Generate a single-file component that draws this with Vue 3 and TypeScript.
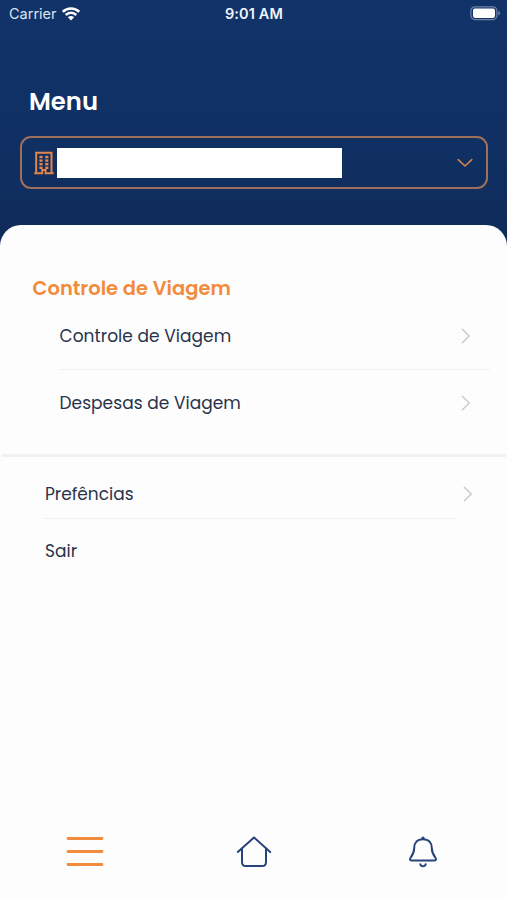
<script setup lang="ts">
interface MenuItem {
  id: string
  label: string
}

const travelItems: MenuItem[] = [
  { id: 'control', label: 'Controle de Viagem' },
  { id: 'expenses', label: 'Despesas de Viagem' },
]
const windows: { x: number; y: number }[] = [0, 1, 2, 3].flatMap((row) =>
  [5.4, 11.2].map((x) => ({ x, y: 4.8 + row * 3.6 })),
)
</script>

<template>
  <main class="screen">
    <header class="header">
      <div class="status">
        <div class="carrier">
          <span>Carrier</span>
          <svg width="18" height="14" viewBox="0 0 18 14">
            <g fill="none" stroke="#fff" stroke-width="2.5">
              <path d="M.8 4.8C5.3.3 12.7.3 17.2 4.8" />
              <path d="M3.7 8C6.7 5.1 11.3 5.1 14.3 8" />
            </g>
            <path d="M5.9 10.2C7.6 8.6 10.4 8.6 12.1 10.2L9 13.5Z" fill="#fff" />
          </svg>
        </div>
        <span class="clock">9:01 AM</span>
        <svg class="battery" width="31" height="15" viewBox="0 0 31 15">
          <rect x=".9" y=".8" width="26" height="12.8" rx="4" fill="none" stroke="#7184a8" stroke-width="1.2" />
          <rect x="3" y="2.5" width="22" height="9.4" rx="1.8" fill="#fff" />
          <path d="M28.3 4.8Q30 5.8 30 7.2T28.3 9.6Z" fill="#7184a8" />
        </svg>
      </div>
      <h1 class="title">Menu</h1>
      <div class="select">
        <svg width="20" height="24" viewBox="0 0 20 24" fill="none" stroke="#e5844a">
          <path d="M2.2 22V1.8H17.5V22" stroke-width="2" />
          <path d="M.3 22.3H8.2V19H11.6V22.3H19.6" stroke-width="1.9" />
          <rect v-for="(w, i) in windows" :key="i" :x="w.x" :y="w.y" width="3.2" height="2.4" fill="#e5844a" stroke="none" />
        </svg>
        <div class="value"></div>
        <svg class="down" width="16" height="10" viewBox="0 0 16 10">
          <path d="M1.2 1.6L8 8L14.8 1.6" fill="none" stroke="#d98650" stroke-width="1.5" stroke-linecap="round" stroke-linejoin="round" />
        </svg>
      </div>
    </header>

    <section class="sheet">
      <div class="travel">
        <h2 class="heading">Controle de Viagem</h2>
        <div v-for="item in travelItems" :key="item.id" class="row" :class="item.id">
          <span>{{ item.label }}</span>
          <svg class="chevron" width="10" height="16" viewBox="0 0 10 16">
            <path d="M1.3 1.2L8.3 8L1.3 14.8" />
          </svg>
        </div>
      </div>
      <div class="general">
        <div class="row preferences">
          <span>Prefências</span>
          <svg class="chevron" width="10" height="16" viewBox="0 0 10 16">
            <path d="M1.3 1.2L8.3 8L1.3 14.8" />
          </svg>
        </div>
        <div class="rule"></div>
        <div class="row exit"><span>Sair</span></div>
      </div>
    </section>

    <nav class="tabs">
      <svg width="38" height="34" viewBox="0 0 38 34">
        <path d="M2 3.5H36M2 16.5H36M2 29.5H36" stroke="#f38b3c" stroke-width="2.8" stroke-linecap="round" />
      </svg>
      <svg width="36" height="34" viewBox="0 0 36 34" fill="none" stroke="#26437a" stroke-width="2" stroke-linecap="round" stroke-linejoin="round">
        <path d="M1.8 17L18 2.4L34.2 17" />
        <path d="M6 14V27.2Q6 31 9.8 31H26.2Q30 31 30 27.2V14" />
      </svg>
      <svg width="30" height="34" viewBox="0 0 30 34" fill="none" stroke="#26437a" stroke-width="2" stroke-linecap="round" stroke-linejoin="round">
        <path d="M15 4.2C9.2 4.2 6.2 8 6.2 13C6.2 18 5 19.5 2.7 22.5C1.3 24.5 2 25.6 4 25.6H26C28 25.6 28.7 24.5 27.3 22.5C25 19.5 23.8 18 23.8 13C23.8 8 20.8 4.2 15 4.2Z" />
        <path d="M12.3 29.2C13 31.8 17 31.8 17.7 29.2" />
        <circle cx="15" cy="3.2" r=".7" fill="#26437a" />
      </svg>
    </nav>
  </main>
</template>

<style>
body {
  background: #fdfdfd;
}
</style>

<style scoped>
.screen {
  box-sizing: border-box;
  height: 900px;
  display: flex;
  flex-direction: column;
  background: #fdfdfd;
  color: #28334b;
  font-family: Poppins, Inter, sans-serif;
}
svg {
  display: block;
  flex: none;
}
.header {
  height: 246px;
  flex: none;
  background: linear-gradient(#113369, #103063 60%, #0f2b58);
}
.status {
  display: grid;
  grid-template-columns: 1fr auto 1fr;
  align-items: center;
  height: 27px;
  padding: 0 6px 0 9px;
  color: #fff;
  font: 14.5px/20px Inter, sans-serif;
}
.carrier {
  display: flex;
  align-items: center;
  gap: 5px;
  color: #dce4f0;
}
.clock {
  font-weight: 600;
  letter-spacing: 0.15px;
  margin-right: 2px;
  color: #f0f4fa;
}
.battery {
  justify-self: end;
}
.title {
  margin: 57px 0 0 29px;
  font-size: 24.3px;
  line-height: 36px;
  font-weight: 600;
  color: #fff;
}
.select {
  box-sizing: border-box;
  display: flex;
  align-items: center;
  height: 53px;
  margin: 16px 19px 0 20px;
  padding: 0 13px 0 12px;
  border: 2px solid #a06f5c;
  border-radius: 11px;
}
.value {
  width: 285px;
  height: 30px;
  margin-left: 3px;
  background: #fff;
}
.down {
  margin-left: auto;
}
.sheet {
  flex: 1;
  margin-top: -21px;
  border-radius: 21px 21px 0 0;
  background: #fdfdfd;
}
.travel {
  box-sizing: border-box;
  height: 229px;
  padding: 49px 17px 0 32px;
}
.heading {
  margin: 0 0 0 0.5px;
  font-size: 19.5px;
  line-height: 30px;
  font-weight: 600;
  color: #f38b3c;
}
.row {
  display: flex;
  align-items: center;
  justify-content: space-between;
  font-size: 17px;
}
.travel .row {
  box-sizing: border-box;
  height: 67px;
  margin-left: 27.5px;
  padding-right: 19px;
  letter-spacing: 0.05px;
}
.travel .control {
  height: 66px;
  padding-bottom: 1px;
  border-bottom: 1px solid #f0f0f2;
}
.travel .expenses {
  height: 66px;
}
.chevron path {
  fill: none;
  stroke: #c6c9d0;
  stroke-width: 1.4;
  stroke-linecap: round;
  stroke-linejoin: round;
}
.general {
  margin: 0 1px 0 2px;
  padding: 3px 33px 0 43px;
  border-top: 3px solid #f1f1f3;
}
.preferences {
  height: 67px;
}
.general .rule {
  height: 1px;
  margin: -9px 16px 0 -1px;
  background: #f0f0f2;
}
.exit {
  height: 63px;
}
.tabs {
  display: grid;
  grid-template-columns: repeat(3, 1fr);
  justify-items: center;
  height: 65px;
}
</style>
